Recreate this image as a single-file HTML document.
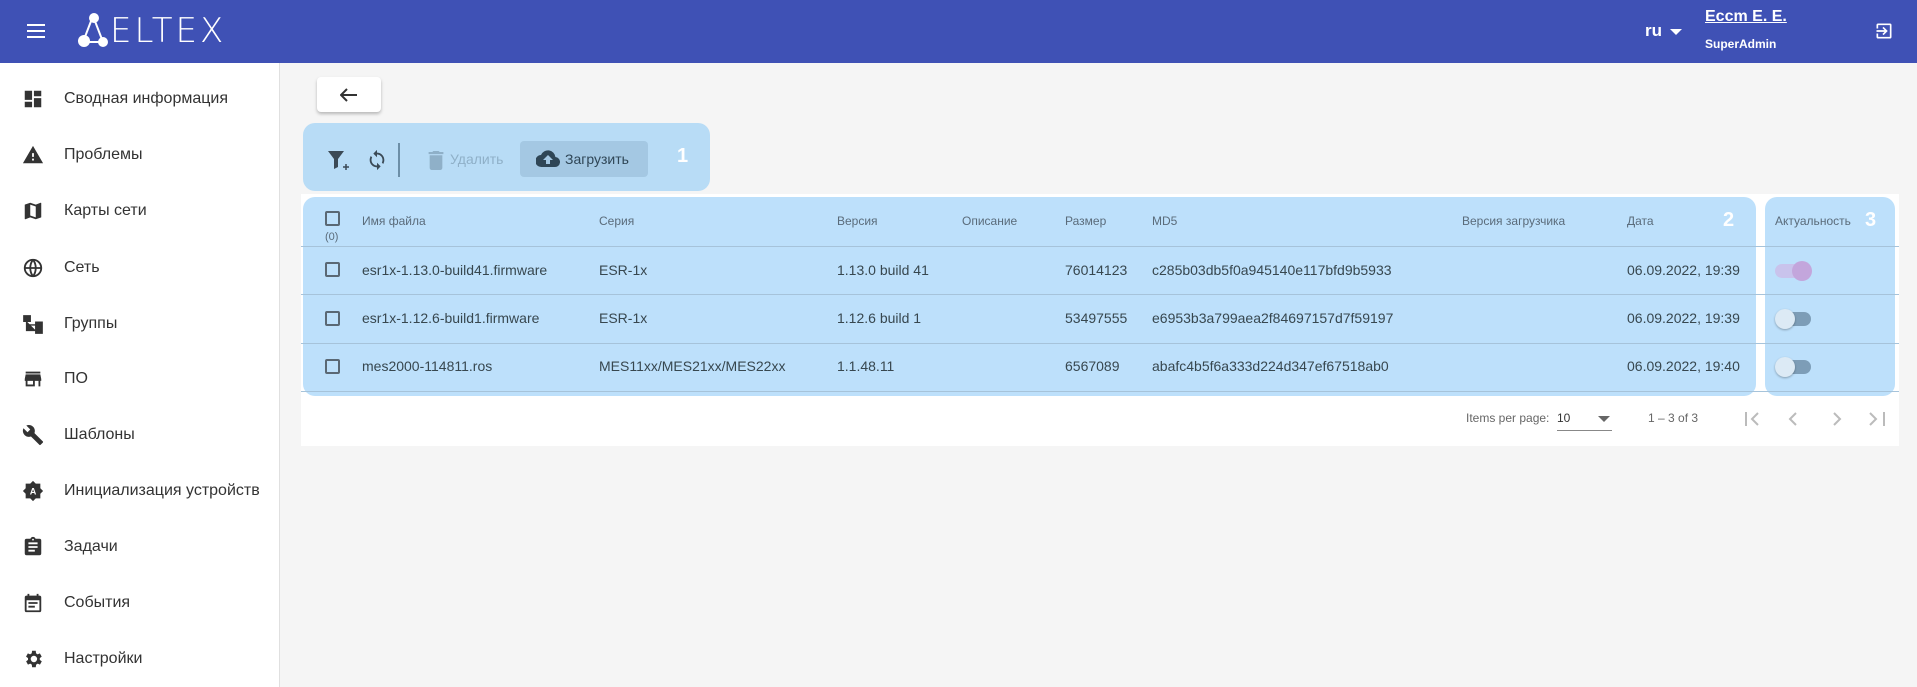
<!DOCTYPE html>
<html><head><meta charset="utf-8"><style>
*{box-sizing:border-box;margin:0;padding:0}
body{width:1917px;height:687px;overflow:hidden;font-family:"Liberation Sans",sans-serif;background:#f5f5f5;position:relative;color:#333}
.abs{position:absolute}
#hdr{left:0;top:0;width:1917px;height:63px;background:#3f51b5;color:#fff}
#side{left:0;top:63px;width:280px;height:624px;background:#fff;border-right:1px solid #e0e0e0}
.item{position:absolute;left:0;height:40px;width:279px;display:flex;align-items:center;font-size:16px;color:#333}
.item svg{position:absolute;left:22px;width:22px;height:22px}
.item span{position:absolute;left:64px}
.hl{background:#bde0fb;border-radius:12px}
.th{position:absolute;font-size:12px;color:#5a6b7a;top:214px}
.td{position:absolute;font-size:14px;color:#37474f}
.line{position:absolute;height:1px;background:#a6c3da}
.cb{position:absolute;width:15px;height:15px;border:2px solid #5a6874;border-radius:2px}
.num{position:absolute;color:#fff;font-weight:bold;font-size:20px}
</style></head><body>
<div id="hdr" class="abs">
 <svg class="abs" style="left:26px;top:23px" width="20" height="16" viewBox="0 0 20 16"><path d="M1 2h18M1 8h18M1 14h18" stroke="#fff" stroke-width="2"/></svg>
 <svg class="abs" style="left:78px;top:12px" width="30" height="36" viewBox="0 0 30 36"><path d="M15 4 L5 30 L25 30 Z" fill="none" stroke="#fff" stroke-width="2"/><circle cx="16" cy="6" r="5" fill="#fff"/><circle cx="6" cy="29" r="6" fill="#fff"/><circle cx="25" cy="30" r="5" fill="#fff"/></svg>
 <div class="abs" style="left:110px;top:11px;font-size:34px;letter-spacing:3px;color:#fff;font-family:'DejaVu Sans',sans-serif;font-weight:300;transform:scaleY(1.0)">ELTEX</div>
 <div class="abs" style="left:1645px;top:21px;font-size:17px;font-weight:bold">ru</div>
 <svg class="abs" style="left:1670px;top:29px" width="12" height="6"><path d="M0 0h12L6 6z" fill="#fff"/></svg>
 <div class="abs" style="left:1705px;top:8px;font-size:16px;font-weight:bold;text-decoration:underline">Еccm E. E.</div>
 <div class="abs" style="left:1705px;top:37px;font-size:12px;font-weight:bold">SuperAdmin</div>
 <svg class="abs" style="left:1874px;top:21px" width="20" height="20" viewBox="0 0 24 24"><path d="M10.1 15.6 11.5 17l5-5-5-5-1.4 1.4 2.6 2.6H3v2h9.7l-2.6 2.6zM19 3H5a2 2 0 0 0-2 2v4h2V5h14v14H5v-4H3v4a2 2 0 0 0 2 2h14a2 2 0 0 0 2-2V5a2 2 0 0 0-2-2z" fill="#fff"/></svg>
</div>
<div id="side" class="abs">
 <div class="item" style="top:16px"><svg viewBox="0 0 24 24"><path d="M3 13h8V3H3zm0 8h8v-6H3zm10 0h8V11h-8zm0-18v6h8V3z" fill="#333"/></svg><span>Сводная информация</span></div>
 <div class="item" style="top:72px"><svg viewBox="0 0 24 24"><path d="M1 21h22L12 2zm12-3h-2v-2h2zm0-4h-2v-4h2z" fill="#333"/></svg><span>Проблемы</span></div>
 <div class="item" style="top:128px"><svg viewBox="0 0 24 24"><path d="M20.5 3l-.16.03L15 5.1 9 3 3.36 4.9a.5.5 0 0 0-.36.48V20.5a.5.5 0 0 0 .5.5l.16-.03L9 18.9l6 2.1 5.64-1.9a.5.5 0 0 0 .36-.48V3.5a.5.5 0 0 0-.5-.5zM15 19l-6-2.11V5l6 2.11z" fill="#333"/></svg><span>Карты сети</span></div>
 <div class="item" style="top:185px"><svg viewBox="0 0 24 24"><circle cx="12" cy="12" r="9" fill="none" stroke="#333" stroke-width="2"/><path d="M3 12h18M12 3c-4 5-4 13 0 18M12 3c4 5 4 13 0 18" fill="none" stroke="#333" stroke-width="2"/></svg><span>Сеть</span></div>
 <div class="item" style="top:241px"><svg viewBox="0 0 24 24"><path d="M2 3h7v6H2zM15 10h7v6h-7zM15 17h7v5h-7zM5 9v10h10M5 13h10" fill="#333" stroke="#333" stroke-width="1.5"/></svg><span>Группы</span></div>
 <div class="item" style="top:296px"><svg viewBox="0 0 24 24"><path d="M20 4H4v2h16zm1 10v-2l-1-5H4l-1 5v2h1v6h10v-6h4v6h2v-6zm-9 4H6v-4h6z" fill="#333"/></svg><span>ПО</span></div>
 <div class="item" style="top:352px"><svg viewBox="0 0 24 24"><path d="M22.7 19l-9.1-9.1c.9-2.3.4-5-1.5-6.9-2-2-5-2.4-7.4-1.3L9 6 6 9 1.6 4.7C.4 7.1.9 10.1 2.9 12.1c1.9 1.9 4.6 2.4 6.9 1.5l9.1 9.1c.4.4 1 .4 1.4 0l2.3-2.3c.5-.4.5-1.1.1-1.4z" fill="#333"/></svg><span>Шаблоны</span></div>
 <div class="item" style="top:408px"><svg viewBox="0 0 24 24"><path d="M12 1l3 3h5v5l3 3-3 3v5h-5l-3 3-3-3H4v-5l-3-3 3-3V4h5z" fill="#333"/><text x="12" y="16" font-size="10" fill="#fff" text-anchor="middle" font-family="Liberation Sans" font-weight="bold">A</text></svg><span>Инициализация устройств</span></div>
 <div class="item" style="top:464px"><svg viewBox="0 0 24 24"><path d="M19 3h-4.2C14.4 1.8 13.3 1 12 1s-2.4.8-2.8 2H5a2 2 0 0 0-2 2v14a2 2 0 0 0 2 2h14a2 2 0 0 0 2-2V5a2 2 0 0 0-2-2zm-7 0a1 1 0 1 1 0 2 1 1 0 0 1 0-2zm2 14H7v-2h7zm3-4H7v-2h10zm0-4H7V7h10z" fill="#333"/></svg><span>Задачи</span></div>
 <div class="item" style="top:520px"><svg viewBox="0 0 24 24"><path d="M19 4h-1V2h-2v2H8V2H6v2H5a2 2 0 0 0-2 2v14a2 2 0 0 0 2 2h14a2 2 0 0 0 2-2V6a2 2 0 0 0-2-2zm0 16H5V9h14zM7 11h10v2H7zm0 4h7v2H7z" fill="#333"/></svg><span>События</span></div>
 <div class="item" style="top:576px"><svg viewBox="0 0 24 24"><path d="M19.4 13a7.8 7.8 0 0 0 0-2l2.1-1.6-2-3.5-2.5 1a7.3 7.3 0 0 0-1.7-1L15 3h-4l-.4 2.9a7.3 7.3 0 0 0-1.7 1l-2.5-1-2 3.5L6.6 11a7.8 7.8 0 0 0 0 2l-2.1 1.6 2 3.5 2.5-1a7.3 7.3 0 0 0 1.7 1L11 21h4l.4-2.9a7.3 7.3 0 0 0 1.7-1l2.5 1 2-3.5zM13 15.5a3.5 3.5 0 1 1 0-7 3.5 3.5 0 0 1 0 7z" fill="#333"/></svg><span>Настройки</span></div>
</div>
<div class="abs" style="left:317px;top:77px;width:64px;height:35px;background:#fff;border-radius:4px;box-shadow:0 2px 3px rgba(0,0,0,.25)"></div>
<svg class="abs" style="left:340px;top:88px" width="18" height="14" viewBox="0 0 18 14"><path d="M1 7h16M7 1 1 7l6 6" fill="none" stroke="#333" stroke-width="2"/></svg>
<div class="abs hl" style="left:303px;top:123px;width:407px;height:68px;background:#b8dcf6"></div>
<svg class="abs" style="left:327px;top:150px" width="24" height="22" viewBox="0 0 24 22"><path d="M1 1h16l-6 8v8l-4 2V9z" fill="#3b4a56"/><path d="M16 17h6M19 14v6" stroke="#3b4a56" stroke-width="1.5"/></svg>
<svg class="abs" style="left:366px;top:148px" width="22" height="24" viewBox="0 0 24 24"><path d="M12 4V1L8 5l4 4V6c3.3 0 6 2.7 6 6 0 1-.3 2-.7 2.8l1.5 1.5C19.5 15 20 13.6 20 12c0-4.4-3.6-8-8-8zm0 14c-3.3 0-6-2.7-6-6 0-1 .3-2 .7-2.8L5.2 7.7C4.5 9 4 10.4 4 12c0 4.4 3.6 8 8 8v3l4-4-4-4z" fill="#3b4a56"/></svg>
<div class="abs" style="left:398px;top:143px;width:2px;height:34px;background:#6c8fa8"></div>
<svg class="abs" style="left:428px;top:151px" width="16" height="19" viewBox="0 0 14 18"><path d="M1 16a2 2 0 0 0 2 2h8a2 2 0 0 0 2-2V4H1zM14 1h-3.5l-1-1h-5l-1 1H0v2h14z" fill="#8fb0c8"/></svg>
<div class="abs" style="left:450px;top:151px;font-size:14px;color:#8fb0c8">Удалить</div>
<div class="abs" style="left:520px;top:141px;width:128px;height:36px;background:#a4c8e3;border-radius:4px"></div>
<svg class="abs" style="left:536px;top:150px" width="24" height="18" viewBox="0 0 24 18"><path d="M19.4 7A7.5 7.5 0 0 0 5 5a6 6 0 0 0 .6 12h13a5 5 0 0 0 .8-10zM14 10v4h-4v-4H7l5-5 5 5z" fill="#2f4656"/></svg>
<div class="abs" style="left:565px;top:151px;font-size:14px;color:#2f4656">Загрузить</div>
<div class="num" style="left:677px;top:145px">1</div>

<div class="abs" style="left:301px;top:194px;width:1598px;height:252px;background:#fff"></div>
<div class="abs hl" style="left:303px;top:197px;width:1453px;height:199px"></div>
<div class="abs hl" style="left:1765px;top:197px;width:130px;height:199px"></div>
<div class="line" style="left:301px;top:246px;width:1598px"></div>
<div class="line" style="left:301px;top:294px;width:1598px"></div>
<div class="line" style="left:301px;top:343px;width:1598px"></div>
<div class="line" style="left:301px;top:391px;width:1598px"></div>
<div class="cb" style="left:325px;top:211px"></div>
<div class="th" style="left:325px;top:231px;font-size:11px">(0)</div>
<div class="th" style="left:362px">Имя файла</div>
<div class="th" style="left:599px">Серия</div>
<div class="th" style="left:837px">Версия</div>
<div class="th" style="left:962px">Описание</div>
<div class="th" style="left:1065px">Размер</div>
<div class="th" style="left:1152px">MD5</div>
<div class="th" style="left:1462px">Версия загрузчика</div>
<div class="th" style="left:1627px">Дата</div>
<div class="th" style="left:1775px">Актуальность</div>
<div class="num" style="left:1723px;top:209px">2</div>
<div class="num" style="left:1865px;top:209px">3</div>

<div class="cb" style="left:325px;top:262px"></div>
<div class="td" style="left:362px;top:262px">esr1x-1.13.0-build41.firmware</div>
<div class="td" style="left:599px;top:262px">ESR-1x</div>
<div class="td" style="left:837px;top:262px">1.13.0 build 41</div>
<div class="td" style="left:1065px;top:262px">76014123</div>
<div class="td" style="left:1152px;top:262px">c285b03db5f0a945140e117bfd9b5933</div>
<div class="td" style="left:1627px;top:262px">06.09.2022, 19:39</div>
<div class="abs" style="left:1775px;top:264px;width:34px;height:14px;border-radius:7px;background:#c9c3ec"></div>
<div class="abs" style="left:1792px;top:261px;width:20px;height:20px;border-radius:50%;background:#c3a6dc"></div>

<div class="cb" style="left:325px;top:311px"></div>
<div class="td" style="left:362px;top:310px">esr1x-1.12.6-build1.firmware</div>
<div class="td" style="left:599px;top:310px">ESR-1x</div>
<div class="td" style="left:837px;top:310px">1.12.6 build 1</div>
<div class="td" style="left:1065px;top:310px">53497555</div>
<div class="td" style="left:1152px;top:310px">e6953b3a799aea2f84697157d7f59197</div>
<div class="td" style="left:1627px;top:310px">06.09.2022, 19:39</div>
<div class="abs" style="left:1777px;top:312px;width:34px;height:14px;border-radius:7px;background:#7d9db7"></div>
<div class="abs" style="left:1775px;top:309px;width:20px;height:20px;border-radius:50%;background:#dceaf5;box-shadow:0 1px 2px rgba(0,0,0,.3)"></div>

<div class="cb" style="left:325px;top:359px"></div>
<div class="td" style="left:362px;top:358px">mes2000-114811.ros</div>
<div class="td" style="left:599px;top:358px">MES11xx/MES21xx/MES22xx</div>
<div class="td" style="left:837px;top:358px">1.1.48.11</div>
<div class="td" style="left:1065px;top:358px">6567089</div>
<div class="td" style="left:1152px;top:358px">abafc4b5f6a333d224d347ef67518ab0</div>
<div class="td" style="left:1627px;top:358px">06.09.2022, 19:40</div>
<div class="abs" style="left:1777px;top:360px;width:34px;height:14px;border-radius:7px;background:#7d9db7"></div>
<div class="abs" style="left:1775px;top:357px;width:20px;height:20px;border-radius:50%;background:#dceaf5;box-shadow:0 1px 2px rgba(0,0,0,.3)"></div>

<div class="abs" style="left:1466px;top:411px;font-size:12px;color:#666">Items per page:</div>
<div class="abs" style="left:1557px;top:411px;font-size:12px;color:#333">10</div>
<svg class="abs" style="left:1598px;top:416px" width="12" height="6"><path d="M0 0h12L6 6z" fill="#666"/></svg>
<div class="abs" style="left:1557px;top:430px;width:55px;height:1px;background:#888"></div>
<div class="abs" style="left:1648px;top:411px;font-size:12px;color:#666">1 – 3 of 3</div>
<svg class="abs" style="left:1743px;top:410px" width="150" height="18" viewBox="0 0 150 18"><g fill="none" stroke="#bbb" stroke-width="2"><path d="M3 2v14M15 3 9 9l6 6M53 3l-6 6 6 6M91 3l6 6-6 6M127 3l6 6-6 6M141 2v14"/></g></svg>
</body></html>
